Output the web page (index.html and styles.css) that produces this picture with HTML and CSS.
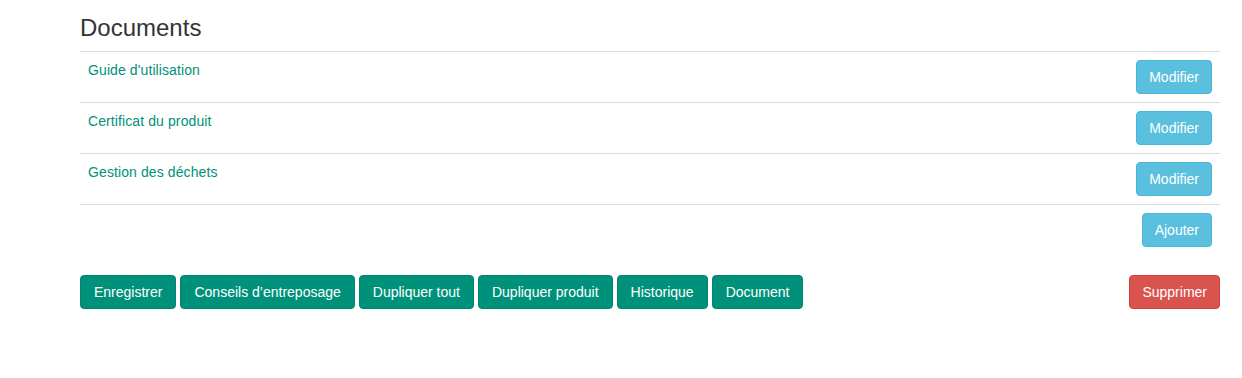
FILE: index.html
```html
<!DOCTYPE html>
<html lang="fr">
<head>
<meta charset="utf-8">
<title>Documents</title>
<link rel="stylesheet" href="styles.css">
</head>
<body>
<div class="container">
  <h3 class="title">Documents</h3>
  <table class="docs">
    <tbody>
      <tr>
        <td><a href="#" class="doc-link">Guide d'utilisation</a></td>
        <td class="actions"><button class="btn btn-info">Modifier</button></td>
      </tr>
      <tr>
        <td><a href="#" class="doc-link">Certificat du produit</a></td>
        <td class="actions"><button class="btn btn-info">Modifier</button></td>
      </tr>
      <tr>
        <td><a href="#" class="doc-link">Gestion des déchets</a></td>
        <td class="actions"><button class="btn btn-info">Modifier</button></td>
      </tr>
      <tr>
        <td></td>
        <td class="actions"><button class="btn btn-info">Ajouter</button></td>
      </tr>
    </tbody>
  </table>
  <div class="toolbar">
    <button class="btn btn-primary">Enregistrer</button>
    <button class="btn btn-primary">Conseils d’entreposage</button>
    <button class="btn btn-primary">Dupliquer tout</button>
    <button class="btn btn-primary">Dupliquer produit</button>
    <button class="btn btn-primary">Historique</button>
    <button class="btn btn-primary">Document</button>
    <button class="btn btn-danger push-right">Supprimer</button>
  </div>
</div>
</body>
</html>
```
FILE: styles.css
```css
html, body {
  margin: 0;
  padding: 0;
  background: #fff;
}
body {
  font-family: "Liberation Sans", Arial, Helvetica, sans-serif;
  font-size: 14px;
  line-height: 20px;
  color: #333;
}
.container {
  width: 1140px;
  margin-left: 80px;
}
.title {
  font-size: 24px;
  font-weight: 500;
  line-height: 26px;
  margin: 15px 0 10px;
  color: #333;
}
.docs {
  width: 100%;
  border-collapse: collapse;
  border-spacing: 0;
  margin-bottom: 20px;
}
.docs td {
  border-top: 1px solid #ddd;
  padding: 8px;
  vertical-align: top;
  line-height: 20px;
}
.docs .actions {
  text-align: right;
}
.doc-link {
  color: #00917a;
  text-decoration: none;
  letter-spacing: 0.1px;
}
.btn {
  display: inline-block;
  font-family: "Liberation Sans", Arial, Helvetica, sans-serif;
  font-size: 14px;
  line-height: 20px;
  padding: 6px 12px;
  border: 1px solid transparent;
  border-radius: 4px;
  color: #fff;
  cursor: pointer;
  margin: 0;
}
.btn-info {
  background: #5bc0de;
  border-color: #46b8da;
}
.btn-primary {
  background: #00917a;
  border-color: #008370;
  padding: 6px 13px;
}
.btn-danger {
  background: #d9534f;
  border-color: #d43f3a;
}
.toolbar {
  display: flex;
  gap: 4px;
}
.push-right {
  margin-left: auto;
}
```
